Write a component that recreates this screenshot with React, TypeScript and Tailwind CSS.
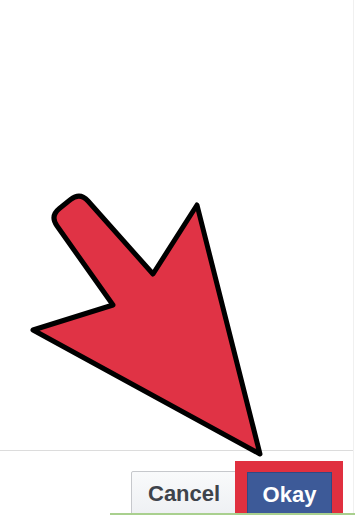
import React from 'react';

function Arrow() {
  return (
    <svg
      className="absolute left-0 top-0 pointer-events-none"
      width={355}
      height={515}
      viewBox="0 0 355 515"
    >
      <path
        d="M113 305 L56.9 225.8 Q50 216 59.4 208.5 L70.6 199.5 Q80 192 88 201 L153 274 L197 205 L260 454 L33 330 Z"
        fill="#e03345"
        stroke="#000"
        strokeWidth={5}
        strokeLinejoin="round"
      />
    </svg>
  );
}

export default function App() {
  return (
    <div
      className="relative w-[355px] h-[515px] overflow-hidden bg-white"
      style={{ fontFamily: '"Liberation Sans", Arial, sans-serif' }}
    >
      <div className="w-[354px] h-full border-r border-[#f0f0f0] flex flex-col">
        <div className="h-[451px] shrink-0 border-b border-[#dcdcdc]" />
        <div className="flex shrink-0 justify-end items-start pr-[10px]">
          <button
            type="button"
            className="mt-[20px] w-[108px] -mr-[4px] h-[46px] shrink-0 rounded-[2px] border border-[#c6c8cc] bg-gradient-to-b from-[#f9fafb] to-[#eef0f3] text-left pl-[16px] text-[22px] leading-[22px] font-bold text-[#3e434b]"
          >
            Cancel
          </button>
          <div className="relative shrink-0 mt-[10px] w-[108px] h-[56px] bg-[#e0303f] px-[12px] pt-[11px]">
            <button
              type="button"
              className="w-[85px] h-[45px] border border-[#2f4a84] bg-[#3d5a98] text-[22px] leading-[22px] font-bold text-white"
            >
              Okay
            </button>
          </div>
        </div>
      </div>
      <div className="absolute bottom-0 left-[110px] right-0 h-[2px] bg-[#a9d08e]" />
      <Arrow />
    </div>
  );
}
